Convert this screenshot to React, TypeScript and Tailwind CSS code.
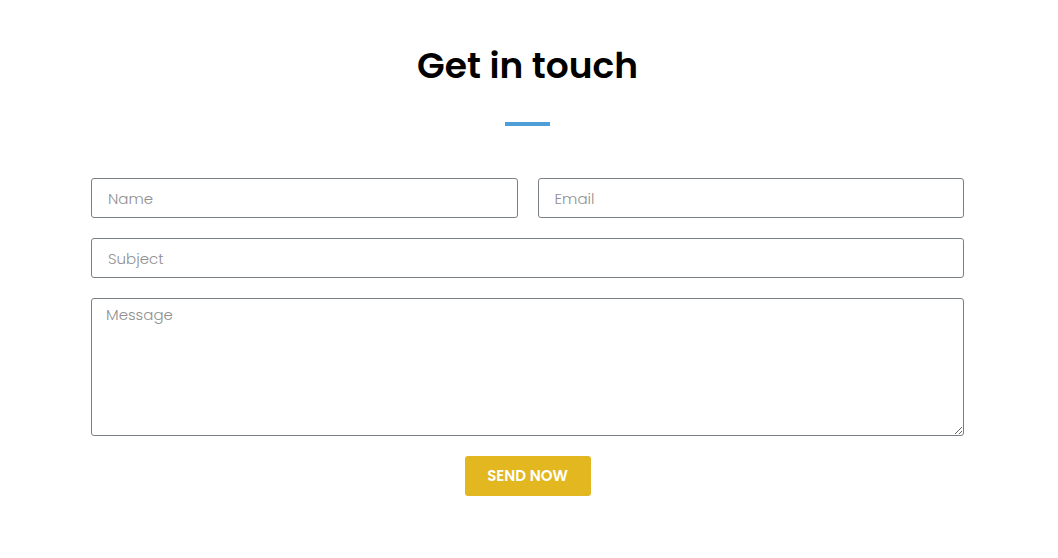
import React from "react";

export default function App() {
  const font = { fontFamily: "Poppins, Inter, 'Noto Sans', sans-serif" };
  return (
    <div className="w-[1058px] h-[558px] bg-white" style={font}>
      <div className="w-[1055px]">
        <div className="flex flex-col items-center pt-[44px]">
          <h1 className="text-[36px] leading-[44px] font-semibold text-black">Get in touch</h1>
          <div className="mt-[34px] w-[45px] h-[4px] bg-[#4e9fd8]" />
        </div>
        <form className="mx-auto w-[873px] mt-[52px] flex flex-col gap-[20px]">
          <div className="flex gap-[20px]">
            <input
              placeholder="Name"
              className="flex-1 min-w-0 h-[40px] border border-[#7a7f85] rounded-[3px] px-[16px] text-[15px] font-light text-gray-700 placeholder:text-[#8f8f8f] outline-none"
            />
            <input
              placeholder="Email"
              className="flex-1 min-w-0 h-[40px] border border-[#7a7f85] rounded-[3px] px-[16px] text-[15px] font-light text-gray-700 placeholder:text-[#8f8f8f] outline-none"
            />
          </div>
          <input
            placeholder="Subject"
            className="h-[40px] border border-[#7a7f85] rounded-[3px] px-[16px] text-[15px] font-light text-gray-700 placeholder:text-[#8f8f8f] outline-none"
          />
          <textarea
            placeholder="Message"
            className="h-[138px] border border-[#7a7f85] rounded-[3px] px-[14px] pt-[5px] text-[15px] font-light text-gray-700 placeholder:text-[#8f8f8f] outline-none"
          />
          <div className="flex justify-center">
            <button
              type="button"
              className="w-[126px] h-[40px] bg-[#e2b71f] rounded-[3px] text-white text-[15px] font-semibold uppercase"
            >
              Send Now
            </button>
          </div>
        </form>
      </div>
    </div>
  );
}
